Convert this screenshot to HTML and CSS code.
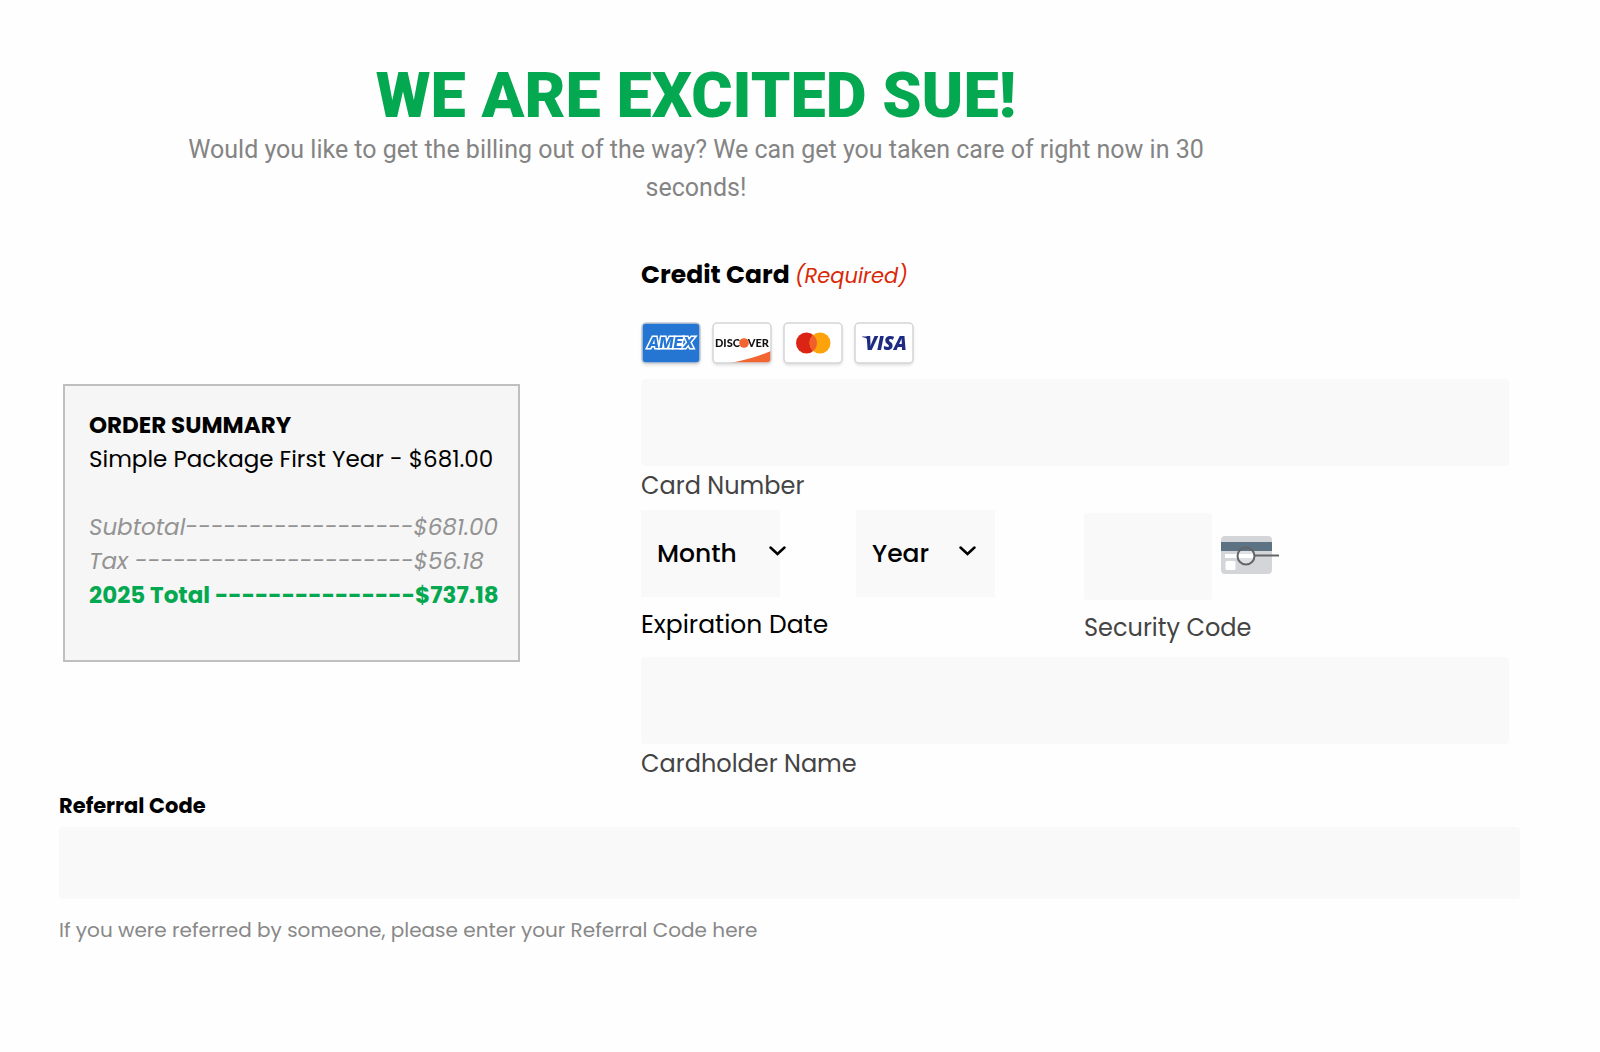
FILE: index.html
```html
<!DOCTYPE html>
<html lang="en">
  <head>
    <meta charset="UTF-8" />
    <meta name="viewport" content="width=device-width, initial-scale=1" />
    <title>Billing</title>
    <link rel="stylesheet" href="styles.css">
  </head>
  <body>
    <header class="intro">
      <h1>WE ARE EXCITED SUE!</h1>
      <p>Would you like to get the billing out of the way? We can get you taken care of right now in 30 seconds!</p>
    </header>

    <form>
      <div class="billing">
        <section class="summary">
          <h2>ORDER SUMMARY</h2>
          <p class="package">Simple Package First Year - $681.00</p>
          <p class="line">Subtotal------------------$681.00</p>
          <p class="line">Tax ----------------------$56.18</p>
          <p class="line total">2025 Total ---------------$737.18</p>
        </section>

        <fieldset class="card">
          <legend>Credit Card <span class="required">(Required)</span></legend>

          <div class="brands">
            <svg class="brand" viewBox="0 0 60 42" role="img" aria-label="American Express">
              <rect x="1" y="1" width="58" height="40" rx="4" fill="#2476d2" stroke="#c6cbd2" stroke-width="1.5" />
              <text x="30" y="26" class="amex">AMEX</text>
            </svg>
            <svg class="brand" viewBox="0 0 60 42" role="img" aria-label="Discover">
              <rect x="1" y="1" width="58" height="40" rx="4" fill="#fff" />
              <path d="M18 41 Q40 37 59 29 V37 Q59 41 55 41 Z" fill="#f26430" />
              <rect x="1" y="1" width="58" height="40" rx="4" fill="none" stroke="#d3d5d8" stroke-width="1.5" />
              <text x="3" y="25" class="discover">DISC</text>
              <text x="57" y="25" class="discover end">VER</text>
              <circle cx="32" cy="21" r="4.800" fill="#f26430" />
            </svg>
            <svg class="brand" viewBox="0 0 60 42" role="img" aria-label="Mastercard">
              <rect x="1" y="1" width="58" height="40" rx="4" fill="#fff" stroke="#d3d5d8" stroke-width="1.5" />
              <circle cx="23.500" cy="21" r="10.500" fill="#dc2414" />
              <circle cx="37" cy="21" r="10.500" fill="#fca30b" />
              <path d="M30.250 13 A10.500 10.500 0 0 1 30.250 29 A10.500 10.500 0 0 1 30.250 13 Z" fill="#f1602b" />
            </svg>
            <svg class="brand" viewBox="0 0 60 42" role="img" aria-label="Visa">
              <rect x="1" y="1" width="58" height="40" rx="4" fill="#fff" stroke="#d3d5d8" stroke-width="1.5" />
              <path d="M8 14.500 H14 L15 18 Q12 15.500 8 15 Z" fill="#1d2b82" />
              <text x="32" y="28" class="visa">VISA</text>
            </svg>
          </div>

          <div class="field">
            <input type="text" id="number" inputmode="numeric">
            <label for="number">Card Number</label>
          </div>

          <div class="row">
            <div class="field" role="group" aria-labelledby="expiration-label">
              <div class="dates">
                <div class="select month">
                  <select id="month" aria-label="Month"><option>Month</option></select>
                  <svg class="arrow" viewBox="0 0 17 10"><path d="M1.500 1.500 L8.500 8 L15.500 1.500" /></svg>
                </div>
                <div class="select">
                  <select id="year" aria-label="Year"><option>Year</option></select>
                  <svg class="arrow" viewBox="0 0 17 10"><path d="M1.500 1.500 L8.500 8 L15.500 1.500" /></svg>
                </div>
              </div>
              <span class="label" id="expiration-label">Expiration Date</span>
            </div>
            <div class="field security">
              <div class="code">
                <input type="text" id="code" inputmode="numeric">
                <svg class="code-icon" viewBox="0 0 60 40" aria-hidden="true">
                  <rect x="1" y="1" width="51" height="38" rx="4" fill="#d4d5d9" />
                  <rect x="1" y="7" width="51" height="9" fill="#5d7384" />
                  <rect x="5" y="19" width="27" height="4" fill="#fff" />
                  <rect x="5.500" y="26" width="10" height="9" rx="1.500" fill="#fff" />
                  <circle cx="26" cy="21" r="8.500" fill="#dfe0e3" />
                  <path d="M18.500 16 A8.500 8.500 0 0 1 33.500 16 Z" fill="#5d7384" />
                  <rect x="18.500" y="19" width="15" height="4" fill="#fff" />
                  <circle cx="26" cy="21" r="8.500" fill="none" stroke="#626467" stroke-width="2" />
                  <path d="M34.500 20.500 H59" stroke="#626467" stroke-width="2" />
                </svg>
              </div>
              <label for="code">Security Code</label>
            </div>
          </div>

          <div class="field">
            <input type="text" id="holder">
            <label for="holder">Cardholder Name</label>
          </div>
        </fieldset>
      </div>

      <div class="referral">
        <label for="referral">Referral Code</label>
        <input type="text" id="referral" aria-describedby="referral-help">
        <p id="referral-help">If you were referred by someone, please enter your Referral Code here</p>
      </div>
    </form>
  </body>
</html>
```

FILE: styles.css
```css
* {
  box-sizing: border-box;
}
body {
  margin: 0;
  padding: 61px 80px 60px 59px;
  background: #fefefe;
  color: #000;
  font-family: Poppins, Inter, sans-serif;
}
h1,
h2,
p {
  margin: 0;
}

.intro {
  margin-right: 187px;
  font-family: Roboto, sans-serif;
  text-align: center;
}
.intro h1 {
  color: #04a850;
  font-size: 63px;
  font-weight: 900;
  line-height: 70px;
}
.intro p {
  max-width: 1100px;
  margin: 0 auto;
  color: #848484;
  font-size: 25px;
  line-height: 38px;
}

.billing {
  display: grid;
  grid-template-columns: minmax(0, 457fr) minmax(0, 868fr);
  column-gap: 121px;
  align-items: start;
  margin-top: 49px;
  padding: 0 11px 0 4px;
}

.summary {
  margin-top: 128px;
  padding: 22px 0 48px 24px;
  border: 2px solid #bfbfc1;
  background: #f6f6f6;
  font-size: 23px;
  line-height: 34px;
  white-space: nowrap;
}
.summary h2 {
  font-size: 23px;
  font-weight: 700;
}
.package {
  margin-bottom: 34px;
}
.line {
  color: #939393;
  font-style: italic;
}
.line.total {
  color: #04a850;
  font-style: normal;
  font-weight: 700;
}

.card {
  min-width: 0;
  margin: 0;
  padding: 0;
  border: 0;
}
.card legend {
  padding: 0;
  font-size: 25px;
  font-weight: 700;
  line-height: 38px;
}
.required {
  color: #d92807;
  font-size: 21px;
  font-style: italic;
  font-weight: 400;
}
.brands {
  display: flex;
  gap: 11px;
  margin: 27px 0 15px;
}
.brand {
  width: 60px;
  height: 42px;
  filter: drop-shadow(0 2px 1px rgba(0, 0, 0, 0.1));
}
.amex {
  fill: #2476d2;
  stroke: #fff;
  stroke-width: 3px;
  paint-order: stroke;
  font: italic 800 15px Inter, sans-serif;
  text-anchor: middle;
}
.discover {
  fill: #111;
  font: 900 11px Lato, sans-serif;
}
.discover.end {
  text-anchor: end;
}
.visa {
  fill: #1d2b82;
  font: italic 800 19px "Open Sans", sans-serif;
  text-anchor: middle;
}

input,
select {
  display: block;
  width: 100%;
  height: 87px;
  padding: 0 16px;
  border: 0;
  border-radius: 4px;
  background: #f9f9f9;
  color: #000;
  font: 500 25px Poppins, Inter, sans-serif;
}
.field label,
.field .label {
  display: block;
  color: #444;
  font-size: 24px;
  line-height: 40px;
}
.row {
  display: grid;
  grid-template-columns: 1fr 1fr;
  column-gap: 18px;
  margin: 4px 0 9px;
}
.dates {
  display: grid;
  grid-template-columns: 1fr 1fr;
  column-gap: 5px;
}
.select {
  position: relative;
  width: 66%;
}
select {
  appearance: none;
  padding-right: 0;
  border-radius: 0;
}
.arrow {
  position: absolute;
  top: 36px;
  right: 19px;
  width: 17px;
  height: 10px;
  fill: none;
  stroke: #000;
  stroke-width: 2.5;
  stroke-linecap: round;
  pointer-events: none;
}
.month .arrow {
  right: -6px;
}
.field .label {
  margin-top: 8px;
  color: #000;
  font-size: 25px;
}
.security {
  padding-top: 3px;
}
.security label {
  margin-top: 8px;
}
.code {
  display: flex;
  align-items: center;
  gap: 8px;
}
.code input {
  width: 128px;
}
.code-icon {
  width: 60px;
  height: 40px;
  margin-bottom: 4px;
}

.referral {
  margin-top: 6px;
}
.referral label {
  display: block;
  font-size: 21px;
  font-weight: 700;
  line-height: 32px;
}
.referral input {
  height: 72px;
  margin-top: 5px;
}
.referral p {
  margin-top: 15px;
  color: #888;
  font-size: 20px;
  line-height: 32px;
}
```
